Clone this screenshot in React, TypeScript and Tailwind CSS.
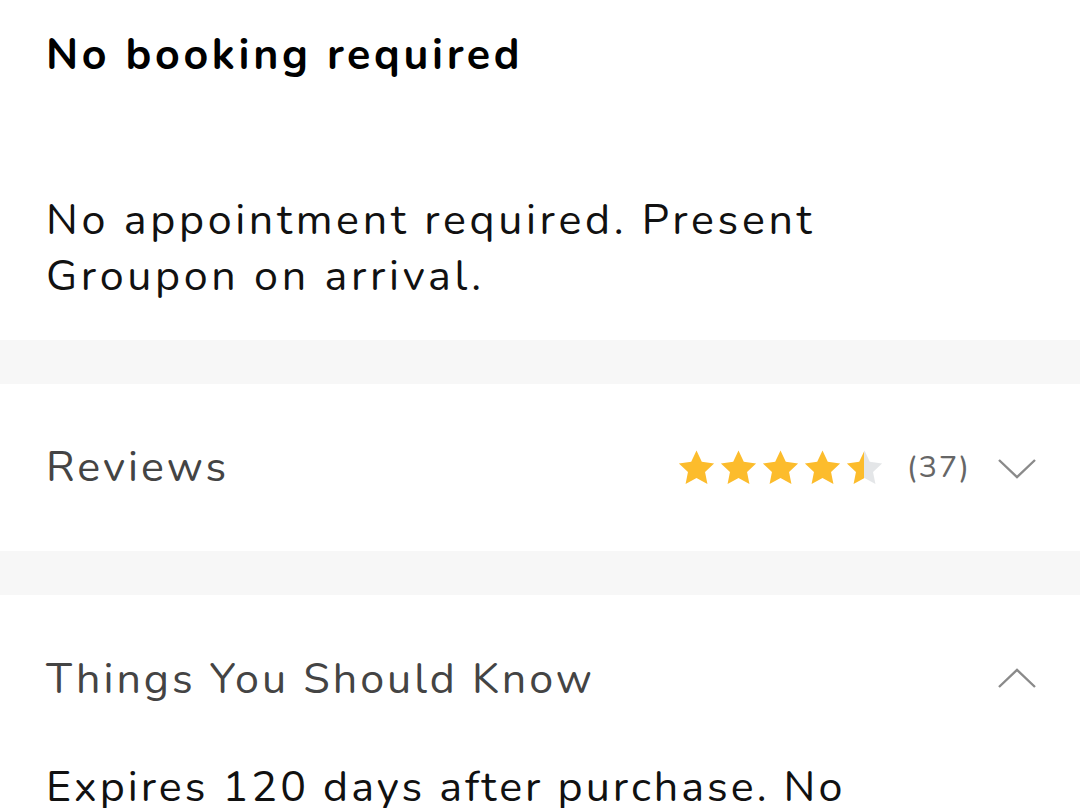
import React from "react";

const font = { fontFamily: '"Nunito", "Lato", "Noto Sans", sans-serif' };

function Star({ fill }: { fill: "full" | "half" }) {
  const d =
    "M12 1.8l3.1 6.6 7.2.9-5.3 5 1.4 7.1L12 17.9l-6.4 3.5 1.4-7.1-5.3-5 7.2-.9z";
  return (
    <svg viewBox="0 0 24 24" className="w-[41px] h-[42px]">
      <defs>
        <linearGradient id="half">
          <stop offset="50%" stopColor="#fcbc2c" />
          <stop offset="50%" stopColor="#e4e6e8" />
        </linearGradient>
      </defs>
      <path d={d} fill={fill === "full" ? "#fcbc2c" : "url(#half)"} />
    </svg>
  );
}

function Chevron({ up }: { up?: boolean }) {
  return (
    <svg viewBox="0 0 40 24" className="w-[40px] h-[24px]">
      <path
        d={up ? "M2 20L20 3L38 20" : "M2 4L20 21L38 4"}
        fill="none"
        stroke="#8a8a8a"
        strokeWidth="2.4"
      />
    </svg>
  );
}

export default function App() {
  return (
    <div className="w-[1080px] h-[808px] overflow-hidden bg-white" style={font}>
      {/* Booking */}
      <section className="px-[46px] pt-[27px] pb-[36px]">
        <h2 className="text-[43px] leading-[56px] font-bold text-black tracking-[0.085em]">
          No booking required
        </h2>
        <p className="mt-[109px] text-[43px] leading-[56px] text-[#111] tracking-[0.085em]">
          No appointment required. Present
          <br />
          Groupon on arrival.
        </p>
      </section>

      <div className="h-[44px] bg-[#f7f7f7]" />

      {/* Reviews */}
      <section className="h-[167px] pl-[46px] pr-[43px] flex items-center justify-between">
        <span className="text-[43px] text-[#444] tracking-[0.07em]">Reviews</span>
        <div className="flex items-center">
          <div className="flex items-center gap-[1px]">
            <Star fill="full" />
            <Star fill="full" />
            <Star fill="full" />
            <Star fill="full" />
            <Star fill="half" />
          </div>
          <span className="ml-[22px] text-[31px] text-[#666] tracking-[0.06em]">(37)</span>
          <span className="ml-[26px]">
            <Chevron />
          </span>
        </div>
      </section>

      <div className="h-[44px] bg-[#f7f7f7]" />

      {/* Things you should know */}
      <section className="pl-[46px] pr-[43px] pt-[56px]">
        <div className="flex items-center justify-between h-[56px]">
          <span className="text-[43px] text-[#444] tracking-[0.07em]">
            Things You Should Know
          </span>
          <Chevron up />
        </div>
        <p className="mt-[52px] text-[43px] leading-[56px] text-[#111] tracking-[0.07em] whitespace-nowrap">
          Expires 120 days after purchase. No
        </p>
      </section>
    </div>
  );
}
